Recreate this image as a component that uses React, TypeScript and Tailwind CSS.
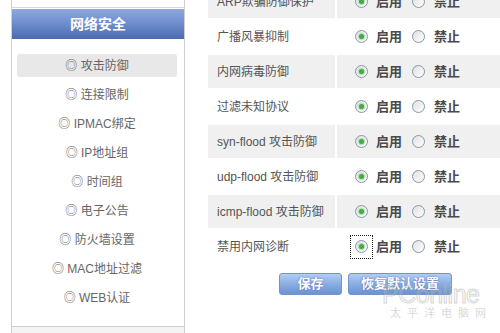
import React from "react";

const FONT = { fontFamily: '"Liberation Sans", Arial, "Noto Sans CJK SC", sans-serif' };

const menu = ["攻击防御", "连接限制", "IPMAC绑定", "IP地址组", "时间组", "电子公告", "防火墙设置", "MAC地址过滤", "WEB认证"];

const rows: { label: string; gray: boolean }[] = [
  { label: "ARP欺骗防御保护", gray: true },
  { label: "广播风暴抑制", gray: false },
  { label: "内网病毒防御", gray: true },
  { label: "过滤未知协议", gray: false },
  { label: "syn-flood 攻击防御", gray: true },
  { label: "udp-flood 攻击防御", gray: false },
  { label: "icmp-flood 攻击防御", gray: true },
  { label: "禁用内网诊断", gray: false },
];

function Radio({ checked }: { checked: boolean }) {
  return (
    <span className="flex h-[13px] w-[13px] items-center justify-center rounded-full border border-[#8797ab] bg-gradient-to-br from-[#e0e0e0] to-white">
      {checked && <span className="h-[5px] w-[5px] rounded-full bg-[#46a846] shadow-[0_0_1px_1px_#a8dca8]" />}
    </span>
  );
}

export default function App() {
  return (
    <div className="relative flex h-[333px] w-[500px] overflow-hidden bg-white" style={FONT}>
      {/* Left panel */}
      <div className="ml-[11px] flex h-[333px] w-[174px] flex-col border-x border-[#cfcfcf]">
        <div className="mt-[7px] h-px bg-[#d6d6d6]" />
        <div className="mt-px flex h-[30px] items-center justify-center bg-gradient-to-b from-[#8ea9de] via-[#6d8ccc] to-[#4c6aad] text-[14px] font-bold text-white">
          网络安全
        </div>
        <div className="mt-[12px] flex flex-col">
          {menu.map((m, i) => (
            <div key={m} className="flex h-[29px] items-center">
              <div
                className={
                  "ml-[5px] mr-[7px] flex h-[23px] flex-1 items-center justify-center rounded-[3px] text-[12px] text-[#666] " +
                  (i === 0 ? "bg-[#e9e8e8]" : "")
                }
              >
                ◎ {m}
              </div>
            </div>
          ))}
        </div>
        <div className="flex-1" />
        <div className="h-[7px] border-t border-[#d0d0d0] bg-[#f4f4f4]" />
      </div>

      {/* Right panel */}
      <div className="ml-[23px] flex flex-1 flex-col">
        <div className="-mt-[15px] flex flex-col gap-[2px]">
          {rows.map((r, i) => (
            <div key={r.label} className="flex h-[33px] gap-[2px]">
              <div
                className={
                  "flex w-[127px] items-center pl-[9px] text-[12px] text-[#555] " + (r.gray ? "bg-[#f0f0f0]" : "")
                }
              >
                {r.label}
              </div>
              <div className={"flex flex-1 items-center pl-[14px] " + (r.gray ? "bg-[#f0f0f0]" : "")}>
                <span
                  className={
                    "flex h-[22px] w-[21px] items-center justify-center " +
                    (i === rows.length - 1 ? "outline outline-1 outline-dotted outline-[#222]" : "")
                  }
                >
                  <Radio checked />
                </span>
                <span className="ml-[4px] text-[13px] font-bold text-[#4a4a4a]">启用</span>
                <span className="ml-[10px] flex h-[22px] w-[13px] items-center justify-center">
                  <Radio checked={false} />
                </span>
                <span className="ml-[9px] text-[13px] font-bold text-[#4a4a4a]">禁止</span>
              </div>
            </div>
          ))}
        </div>
        <div className="mt-[10px] flex gap-[6px] pl-[71px]">
          <button className="flex h-[22px] w-[63px] items-center justify-center rounded-[3px] border border-[#7294c9] bg-gradient-to-b from-[#b4cdf0] via-[#8aaee2] to-[#6b93d2] text-[13px] font-bold text-white [text-shadow:0_0_2px_#4a6aa8]">
            保存
          </button>
          <button className="flex h-[22px] w-[104px] items-center justify-center rounded-[3px] border border-[#7294c9] bg-gradient-to-b from-[#b4cdf0] via-[#8aaee2] to-[#6b93d2] text-[13px] font-bold text-white [text-shadow:0_0_2px_#4a6aa8]">
            恢复默认设置
          </button>
        </div>
      </div>

      {/* Watermark overlay */}
      <div className="pointer-events-none absolute left-[382px] top-[282px] flex flex-col items-start">
        <div className="text-[25px] leading-[24px] tracking-[-0.5px] text-white/10 [-webkit-text-stroke:1px_rgba(170,170,170,0.5)]">
          PConline
        </div>
        <div className="ml-[8px] mt-[1px] text-[11px] leading-[12px] tracking-[6px] text-[#c8c8c8]/70">太平洋电脑网</div>
      </div>
    </div>
  );
}
